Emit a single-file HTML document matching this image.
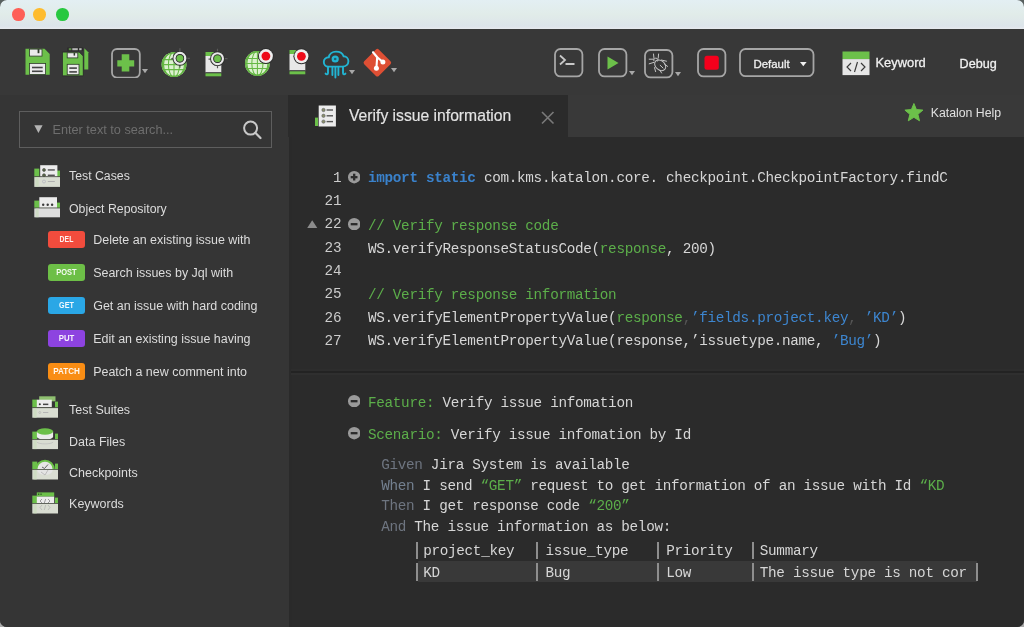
<!DOCTYPE html><html><head><meta charset="utf-8"><style>html,body{margin:0;padding:0;width:1024px;height:627px;overflow:hidden;background:#2b2b2b}</style></head><body><div style="position:relative;width:1024px;height:627px;overflow:hidden;will-change:transform"><div style="position:absolute;left:0px;top:0px;width:1024px;height:313px;background:#58605f"></div>
<div style="position:absolute;left:0px;top:313px;width:1024px;height:314px;background:#a9a9a9"></div>
<div style="position:absolute;left:0;top:0;width:1024px;height:627px;border-radius:7px;overflow:hidden;background:#353535">
<div style="position:absolute;left:0px;top:0px;width:1024px;height:29px;background:linear-gradient(#e3eff3,#e1ece9 50%,#dce4ea 90%,#e6e9ee)"></div>
<div style="position:absolute;left:12.45px;top:8.2px;width:12.6px;height:12.6px;border-radius:50%;background:#fe5f57"></div>
<div style="position:absolute;left:33.45px;top:8.2px;width:12.6px;height:12.6px;border-radius:50%;background:#febc2e"></div>
<div style="position:absolute;left:56.45px;top:8.2px;width:12.6px;height:12.6px;border-radius:50%;background:#28c840"></div>
<div style="position:absolute;left:0px;top:29px;width:1024px;height:66px;background:#383838"></div>
<div style="position:absolute;left:0px;top:95px;width:288.8px;height:532px;background:#353535"></div>
<div style="position:absolute;left:288.8px;top:95px;width:3.4px;height:532px;background:#2a2a2a"></div>
<div style="position:absolute;left:292px;top:95px;width:732px;height:42px;background:#393939"></div>
<div style="position:absolute;left:288px;top:95px;width:280px;height:42px;background:#2b2b2b"></div>
<div style="position:absolute;left:292.2px;top:137px;width:732px;height:490px;background:#2b2b2b"></div>
<div style="position:absolute;left:291px;top:369px;width:733px;height:2px;background:#2d2d2d"></div>
<div style="position:absolute;left:291px;top:371px;width:733px;height:1.5px;background:#232323"></div>
<div style="position:absolute;left:291px;top:372.5px;width:733px;height:2.5px;background:#2f2f2f"></div>
<svg style="position:absolute;left:25px;top:48px;" width="26" height="28" viewBox="0 0 26 28">
<path d="M0.5 0.8 H19.5 L24.7 6 V26.8 H0.5 Z" fill="#6cc04a"/>
<rect x="4.5" y="1.1" width="12.5" height="7" fill="#eaeaea" stroke="#2e3a2a" stroke-width="0.8"/>
<rect x="12.6" y="1.1" width="1.8" height="4.1" fill="#2e3a2a"/>
<rect x="4.5" y="15.4" width="16.1" height="11" fill="#eaeaea" stroke="#2e3a2a" stroke-width="0.8"/>
<rect x="7" y="18.7" width="10.7" height="1.6" fill="#444"/>
<rect x="7" y="22.5" width="10.7" height="1.6" fill="#444"/>
</svg>
<svg style="position:absolute;left:62px;top:47px;" width="28" height="30" viewBox="0 0 28 30">
<path d="M22.3 1.3 L26.3 5.3 V22.6 H22.3 Z" fill="#6cc04a"/>
<rect x="5.3" y="0.6" width="15.8" height="3.2" fill="#2a2a2a"/>
<rect x="6.8" y="1.2" width="2.6" height="2" fill="#5e8f48"/><rect x="10.3" y="1.2" width="5.5" height="2" fill="#b8b8b8"/><rect x="17.2" y="1.2" width="2.4" height="2" fill="#b8b8b8"/>
<path d="M0.3 5 H17.3 L21.3 9 V28.9 H0.3 Z" fill="#6cc04a" stroke="#2b2b2b" stroke-width="1"/>
<rect x="5.2" y="5.8" width="10.6" height="5.1" fill="#eaeaea" stroke="#2e3a2a" stroke-width="0.8"/>
<rect x="11.6" y="5.8" width="1.5" height="2.8" fill="#2e3a2a"/>
<rect x="5.2" y="17.3" width="11.8" height="10.4" fill="#eaeaea" stroke="#2e3a2a" stroke-width="0.8"/>
<rect x="7.3" y="20.3" width="7.6" height="1.6" fill="#444"/>
<rect x="7.3" y="24.1" width="7.6" height="1.6" fill="#444"/>
</svg>
<svg style="position:absolute;left:111px;top:48px;" width="30" height="30" viewBox="0 0 30 30">
<rect x="1" y="1" width="27.8" height="28.6" rx="5" fill="none" stroke="#a6a6a6" stroke-width="1.8"/>
<path d="M10.7 6.3 H18.3 V12.2 H23.2 V18.6 H18.3 V23.6 H10.7 V18.6 H6.3 V12.2 H10.7 Z" fill="#6cc04a"/>
</svg>
<svg style="position:absolute;left:142.4px;top:69.3px;" width="6" height="5.2" viewBox="0 0 6 5.2"><path d="M0 0 H6 L3.0 4.2 Z" fill="#a8a8a8"/></svg>
<svg style="position:absolute;left:158px;top:44px;" width="36" height="36" viewBox="0 0 36 36">
<defs><clipPath id="gc160206"><circle cx="16" cy="20.6" r="12.4"/></clipPath></defs>
<circle cx="16" cy="20.6" r="12.4" fill="#dcf1cf"/>
<g clip-path="url(#gc160206)" fill="none" stroke="#66b845" stroke-width="1.05">
<path d="M3.5999999999999996 15.600000000000001 H28.4 M3.5999999999999996 20.6 H28.4 M3.5999999999999996 25.6 H28.4 M16 8.200000000000001 V33.0"/>
<ellipse cx="16" cy="20.6" rx="5.58" ry="12.4"/>
<ellipse cx="16" cy="20.6" rx="10.54" ry="12.4"/>
</g>
<circle cx="16" cy="20.6" r="11.700000000000001" fill="none" stroke="#62b441" stroke-width="1.4"/>

<path d="M21.9 4.300000000000001 V7.800000000000001 M28.4 14.3 H31.9 M21.9 20.8 V23.8 M15.399999999999999 14.8 H12.899999999999999" stroke="#5a5a5a" stroke-width="1.2"/>
<circle cx="21.9" cy="14.3" r="7.4" fill="#2e2e2e"/>
<circle cx="21.9" cy="14.3" r="5.35" fill="none" stroke="#e8e8e8" stroke-width="2.3"/>
<circle cx="21.9" cy="14.3" r="4.1" fill="#333"/>
<circle cx="21.9" cy="14.3" r="3.4" fill="#6cc04a"/>
</svg>
<svg style="position:absolute;left:205px;top:48px;" width="30" height="30" viewBox="0 0 30 30">
<rect x="0.5" y="8" width="15.8" height="16.5" fill="#e8e8e8"/>
<rect x="0.5" y="4" width="15.8" height="4" fill="#6cc04a"/>
<rect x="0.5" y="24.3" width="15.8" height="1" fill="#3a3a3a"/>
<rect x="0.5" y="25.3" width="15.8" height="3" fill="#6cc04a"/>

<path d="M12.5 0.6999999999999993 V4.199999999999999 M19.0 10.7 H22.5 M12.5 17.2 V20.2 M6.0 11.2 H3.5" stroke="#5a5a5a" stroke-width="1.2"/>
<circle cx="12.5" cy="10.7" r="7.4" fill="#2e2e2e"/>
<circle cx="12.5" cy="10.7" r="5.35" fill="none" stroke="#e8e8e8" stroke-width="2.3"/>
<circle cx="12.5" cy="10.7" r="4.1" fill="#333"/>
<circle cx="12.5" cy="10.7" r="3.4" fill="#6cc04a"/>
</svg>
<svg style="position:absolute;left:242px;top:44px;" width="36" height="36" viewBox="0 0 36 36">
<defs><clipPath id="gc154194"><circle cx="15.4" cy="19.4" r="12.4"/></clipPath></defs>
<circle cx="15.4" cy="19.4" r="12.4" fill="#dcf1cf"/>
<g clip-path="url(#gc154194)" fill="none" stroke="#66b845" stroke-width="1.05">
<path d="M3.0 14.399999999999999 H27.8 M3.0 19.4 H27.8 M3.0 24.4 H27.8 M15.4 6.999999999999998 V31.799999999999997"/>
<ellipse cx="15.4" cy="19.4" rx="5.58" ry="12.4"/>
<ellipse cx="15.4" cy="19.4" rx="10.54" ry="12.4"/>
</g>
<circle cx="15.4" cy="19.4" r="11.700000000000001" fill="none" stroke="#62b441" stroke-width="1.4"/>

<circle cx="23.9" cy="12.1" r="8" fill="#2e2e2e"/>
<circle cx="23.9" cy="12.1" r="7.0" fill="#eeeeee"/>
<circle cx="23.9" cy="12.1" r="4.4" fill="#ee0b1a"/>
</svg>
<svg style="position:absolute;left:289px;top:46px;" width="30" height="30" viewBox="0 0 30 30">
<rect x="0.5" y="8" width="15.8" height="16.5" fill="#e8e8e8"/>
<rect x="0.5" y="4" width="15.8" height="4" fill="#6cc04a"/>
<rect x="0.5" y="24.3" width="15.8" height="1" fill="#3a3a3a"/>
<rect x="0.5" y="25.3" width="15.8" height="3" fill="#6cc04a"/>

<circle cx="12.4" cy="10.3" r="8" fill="#2e2e2e"/>
<circle cx="12.4" cy="10.3" r="7.0" fill="#eeeeee"/>
<circle cx="12.4" cy="10.3" r="4.4" fill="#ee0b1a"/>
</svg>
<svg style="position:absolute;left:320px;top:48px;" width="34" height="32" viewBox="0 0 34 32">
<g fill="none" stroke="#22b5d3" stroke-width="1.9" stroke-linecap="round">
<path d="M8.2 18.6 H22.2 C26 18.6 28.4 16.2 28.4 13.2 C28.4 10.3 26.2 8.3 23.6 8.3 C22.6 5.2 19.5 3.6 16 3.6 C12.2 3.6 9.3 6 8.8 9.3 C5.8 9.4 3.8 11.5 3.8 14 C3.8 16.6 5.8 18.6 8.2 18.6 Z"/>
<path d="M8 19 V25 C8 26.5 6.5 26.8 5.6 25.6 M12.4 19.5 V27 M15.4 19.5 V29.5 M18.4 19.5 V27 M23 19 V25 C23 26.5 24.5 26.8 25.4 25.6"/>
</g><circle cx="15.2" cy="11" r="3.6" fill="#22b5d3"/><circle cx="15.2" cy="11" r="1.3" fill="#1d5f70"/>
</svg>
<svg style="position:absolute;left:349.3px;top:69.7px;" width="6" height="5.2" viewBox="0 0 6 5.2"><path d="M0 0 H6 L3.0 4.2 Z" fill="#a8a8a8"/></svg>
<svg style="position:absolute;left:362px;top:47px;" width="32" height="32" viewBox="0 0 32 32">
<rect x="5.4" y="5.4" width="20.6" height="20.6" rx="2" transform="rotate(45 15.5 15.3)" fill="#de4f34"/>
<g stroke="#fff" stroke-width="2.1" fill="none" stroke-linecap="round"><path d="M11 5.2 L15.2 10.2 L14.4 21 M15.2 10.2 L20.8 15"/></g>
<circle cx="14.4" cy="21.3" r="2.5" fill="#fff"/><circle cx="20.9" cy="15" r="2.5" fill="#fff"/>
</svg>
<svg style="position:absolute;left:390.5px;top:67.7px;" width="6" height="5.2" viewBox="0 0 6 5.2"><path d="M0 0 H6 L3.0 4.2 Z" fill="#a8a8a8"/></svg>
<svg style="position:absolute;left:554px;top:48px;" width="30" height="30" viewBox="0 0 30 30"><rect x="1" y="1" width="27.4" height="27.4" rx="5.5" fill="none" stroke="#a6a6a6" stroke-width="1.8"/><path d="M6 7.5 L11 12 L6 16.5 M11.5 16 H20.5" fill="none" stroke="#c8c8c8" stroke-width="1.8"/></svg>
<svg style="position:absolute;left:598px;top:48px;" width="30" height="30" viewBox="0 0 30 30"><rect x="1" y="1" width="27.4" height="27.4" rx="5.5" fill="none" stroke="#a6a6a6" stroke-width="1.8"/><path d="M9.5 8.5 L20.5 15 L9.5 21.5 Z" fill="#6cc04a"/></svg>
<svg style="position:absolute;left:629.2px;top:71px;" width="6" height="5.2" viewBox="0 0 6 5.2"><path d="M0 0 H6 L3.0 4.2 Z" fill="#a8a8a8"/></svg>
<svg style="position:absolute;left:644px;top:48.5px;" width="30" height="30" viewBox="0 0 30 30"><rect x="1" y="1" width="27.4" height="27.4" rx="5.5" fill="none" stroke="#a6a6a6" stroke-width="1.8"/><g fill="none" stroke="#c4c4c4" stroke-width="1" stroke-linecap="round">
<ellipse cx="16.2" cy="16.3" rx="6.2" ry="4.6" transform="rotate(42 16.2 16.3)"/>
<path d="M9.8 11.8 C9.5 9.8 11.2 8.6 13 9.4 C14.4 10 14.2 11.5 13.6 12.2"/>
<path d="M9.5 5 L10 9.3 M14.6 5 L14.2 9.2 M5.2 10.2 H9.6 M5.2 14.8 L9.8 13.4 M10.5 18.6 L11.6 22.6 M17.2 11 L22.5 12.2 M20.6 15.2 L23.6 17.4 M15.8 21.2 L17.6 24 M16.2 16.3 L19 19"/>
</g></svg>
<svg style="position:absolute;left:674.8px;top:71.7px;" width="6" height="5.2" viewBox="0 0 6 5.2"><path d="M0 0 H6 L3.0 4.2 Z" fill="#a8a8a8"/></svg>
<svg style="position:absolute;left:697px;top:48px;" width="30" height="30" viewBox="0 0 30 30"><rect x="1" y="1" width="27.4" height="27.4" rx="5.5" fill="none" stroke="#a6a6a6" stroke-width="1.8"/><rect x="7.5" y="7.8" width="14.3" height="14" rx="2.5" fill="#f5001c"/></svg>
<svg style="position:absolute;left:739px;top:48px;" width="76" height="30" viewBox="0 0 76 30"><rect x="1" y="1" width="73.5" height="27.2" rx="5.5" fill="none" stroke="#a6a6a6" stroke-width="1.8"/><path d="M61 14 H67.6 L64.3 18.3 Z" fill="#f0f0f0"/></svg>
<div style="position:absolute;left:753.40px;top:58.51px;font:400 11.45px/11.45px 'Liberation Sans', sans-serif;color:#f0f0f0;white-space:pre;-webkit-text-stroke:0.3px #f0f0f0">Default</div>
<svg style="position:absolute;left:842px;top:51px;" width="28" height="25" viewBox="0 0 28 25"><rect x="0.5" y="0.5" width="27" height="7.6" fill="#6cc04a"/><rect x="0.5" y="8.1" width="27" height="16" fill="#e6e6e6"/><path d="M9 12 L5 16 L9 20 M19 12 L23 16 L19 20 M15.5 11 L12.5 21" fill="none" stroke="#3a3a3a" stroke-width="1.15"/></svg>
<div style="position:absolute;left:875.50px;top:57.39px;font:400 12.9px/12.9px 'Liberation Sans', sans-serif;color:#f0f0f0;white-space:pre;-webkit-text-stroke:0.3px #f0f0f0">Keyword</div>
<div style="position:absolute;left:959.60px;top:57.64px;font:400 12.6px/12.6px 'Liberation Sans', sans-serif;color:#f0f0f0;white-space:pre;-webkit-text-stroke:0.3px #f0f0f0">Debug</div>
<div style="position:absolute;left:19.3px;top:111.4px;width:252.7px;height:37.1px;box-sizing:border-box;border:1.8px solid #5e5e5e"></div>
<svg style="position:absolute;left:34px;top:124.5px;" width="9" height="8.5" viewBox="0 0 9 8.5"><path d="M0.3 0.3 H8.6 L4.45 8 Z" fill="#b4b4b4"/></svg>
<div style="position:absolute;left:52.50px;top:123.66px;font:400 12.7px/12.7px 'Liberation Sans', sans-serif;color:#6e6e6e;white-space:pre;">Enter text to search...</div>
<svg style="position:absolute;left:240px;top:118px;" width="24" height="24" viewBox="0 0 24 24"><circle cx="10.6" cy="10.1" r="6.5" fill="none" stroke="#c8c8c8" stroke-width="2"/><path d="M15.3 14.8 L20.5 20" stroke="#c8c8c8" stroke-width="2.2" stroke-linecap="round"/></svg>
<svg style="position:absolute;left:33.6px;top:164.7px;" width="27" height="23" viewBox="0 0 27 23">
<rect x="0.3" y="3.6" width="5" height="8.200000000000001" fill="#6cc04a"/>
<rect x="23" y="5.6" width="3" height="6.200000000000001" fill="#6cc04a"/>
<rect x="6.2" y="0.2" width="17.2" height="11.8" fill="#ececec"/>
<circle cx="10" cy="4.9" r="1.5" fill="#5b6b48" stroke="#333" stroke-width="0.5"/><rect x="13.8" y="4.3" width="7" height="1.3" fill="#444"/>
<circle cx="10" cy="10.2" r="1.5" fill="#5b6b48" stroke="#333" stroke-width="0.5"/><rect x="13.8" y="9.6" width="7" height="1.3" fill="#444"/>
<rect x="0.3" y="11.200000000000001" width="25.7" height="0.9" fill="#4f5349"/>
<rect x="0.3" y="12.100000000000001" width="25.7" height="9.8" fill="#d9ddd2"/>
<rect x="1.5" y="12.100000000000001" width="3.2" height="9.8" fill="#c9dcbc" opacity="0.7"/>
<circle cx="10" cy="16.5" r="1.5" fill="none" stroke="#aab" stroke-width="0.6"/><rect x="13.8" y="16" width="7" height="1" fill="#b0b0b0"/>
</svg>
<div style="position:absolute;left:69.00px;top:169.89px;font:400 12.3px/12.3px 'Liberation Sans', sans-serif;color:#dcdcdc;white-space:pre;">Test Cases</div>
<svg style="position:absolute;left:33.6px;top:197.3px;" width="27" height="23" viewBox="0 0 27 23">
<rect x="0.3" y="3.6" width="5" height="7.5" fill="#6cc04a"/>
<rect x="23" y="5.6" width="3" height="5.5" fill="#6cc04a"/>
<rect x="5.3" y="0.2" width="17.7" height="11" fill="#ececec"/><circle cx="9.2" cy="7.7" r="1.2" fill="#3a3a3a"/><circle cx="13.7" cy="7.7" r="1.2" fill="#3a3a3a"/><circle cx="18.1" cy="7.7" r="1.2" fill="#3a3a3a"/>
<rect x="0.3" y="10.5" width="25.7" height="0.9" fill="#4f5349"/>
<rect x="0.3" y="11.4" width="25.7" height="8.9" fill="#dedede"/>
<rect x="1.5" y="11.4" width="3.2" height="8.9" fill="#c9dcbc" opacity="0.7"/>

</svg>
<div style="position:absolute;left:69.00px;top:202.99px;font:400 12.3px/12.3px 'Liberation Sans', sans-serif;color:#dcdcdc;white-space:pre;">Object Repository</div>
<div style="position:absolute;left:48px;top:231px;width:37px;height:16.6px;border-radius:3px;background:#f24c3d"></div>
<div style="position:absolute;left:48px;top:231.9px;width:37px;height:16.6px;font:700 8.2px/16.6px 'Liberation Sans', sans-serif;color:rgba(255,255,255,0.92);text-align:center;transform:scaleX(0.84)">DEL</div>
<div style="position:absolute;left:93.20px;top:233.94px;font:400 12.48px/12.48px 'Liberation Sans', sans-serif;color:#dcdcdc;white-space:pre;">Delete an existing issue with</div>
<div style="position:absolute;left:48px;top:264px;width:37px;height:16.6px;border-radius:3px;background:#6dbf47"></div>
<div style="position:absolute;left:48px;top:264.9px;width:37px;height:16.6px;font:700 8.2px/16.6px 'Liberation Sans', sans-serif;color:rgba(255,255,255,0.92);text-align:center;transform:scaleX(0.915)">POST</div>
<div style="position:absolute;left:93.20px;top:266.94px;font:400 12.48px/12.48px 'Liberation Sans', sans-serif;color:#dcdcdc;white-space:pre;">Search issues by Jql with</div>
<div style="position:absolute;left:48px;top:297px;width:37px;height:16.6px;border-radius:3px;background:#2aa7e6"></div>
<div style="position:absolute;left:48px;top:297.9px;width:37px;height:16.6px;font:700 8.2px/16.6px 'Liberation Sans', sans-serif;color:rgba(255,255,255,0.92);text-align:center;transform:scaleX(0.88)">GET</div>
<div style="position:absolute;left:93.20px;top:299.94px;font:400 12.48px/12.48px 'Liberation Sans', sans-serif;color:#dcdcdc;white-space:pre;">Get an issue with hard coding</div>
<div style="position:absolute;left:48px;top:330px;width:37px;height:16.6px;border-radius:3px;background:#8d43e0"></div>
<div style="position:absolute;left:48px;top:330.9px;width:37px;height:16.6px;font:700 8.2px/16.6px 'Liberation Sans', sans-serif;color:rgba(255,255,255,0.92);text-align:center;transform:scaleX(0.95)">PUT</div>
<div style="position:absolute;left:93.20px;top:332.94px;font:400 12.48px/12.48px 'Liberation Sans', sans-serif;color:#dcdcdc;white-space:pre;">Edit an existing issue having</div>
<div style="position:absolute;left:48px;top:363px;width:37px;height:16.6px;border-radius:3px;background:#f98d14"></div>
<div style="position:absolute;left:48px;top:363.9px;width:37px;height:16.6px;font:700 8.2px/16.6px 'Liberation Sans', sans-serif;color:rgba(255,255,255,0.92);text-align:center;transform:scaleX(0.99)">PATCH</div>
<div style="position:absolute;left:93.20px;top:365.94px;font:400 12.48px/12.48px 'Liberation Sans', sans-serif;color:#dcdcdc;white-space:pre;">Peatch a new comment into</div>
<div style="position:absolute;left:69.10px;top:403.84px;font:400 12.48px/12.48px 'Liberation Sans', sans-serif;color:#dcdcdc;white-space:pre;">Test Suites</div>
<div style="position:absolute;left:69.10px;top:435.54px;font:400 12.48px/12.48px 'Liberation Sans', sans-serif;color:#dcdcdc;white-space:pre;">Data Files</div>
<div style="position:absolute;left:69.10px;top:466.64px;font:400 12.48px/12.48px 'Liberation Sans', sans-serif;color:#dcdcdc;white-space:pre;">Checkpoints</div>
<div style="position:absolute;left:69.10px;top:498.14px;font:400 12.48px/12.48px 'Liberation Sans', sans-serif;color:#dcdcdc;white-space:pre;">Keywords</div>
<svg style="position:absolute;left:32.3px;top:396px;" width="27" height="23" viewBox="0 0 27 23">
<rect x="0.3" y="3.6" width="5" height="8.200000000000001" fill="#6cc04a"/>
<rect x="23" y="5.6" width="3" height="6.200000000000001" fill="#6cc04a"/>
<rect x="7.2" y="0.3" width="16.3" height="5" fill="#8fc070"/><rect x="4.8" y="3.7" width="15" height="7.6" fill="#ececec"/><circle cx="7.8" cy="8.3" r="1" fill="#333"/><rect x="11" y="7.6" width="5.3" height="1.5" fill="#444"/>
<rect x="0.3" y="11.200000000000001" width="25.7" height="0.9" fill="#4f5349"/>
<rect x="0.3" y="12.100000000000001" width="25.7" height="9.6" fill="#d9ddd2"/>
<rect x="1.5" y="12.100000000000001" width="3.2" height="9.6" fill="#c9dcbc" opacity="0.7"/>
<circle cx="7.8" cy="16.5" r="1" fill="none" stroke="#aaa" stroke-width="0.5"/><rect x="11" y="16" width="5.3" height="1" fill="#b5b5b5"/>
</svg>
<svg style="position:absolute;left:32.3px;top:427.8px;" width="27" height="23" viewBox="0 0 27 23">
<rect x="0.3" y="3.6" width="5" height="8.0" fill="#6cc04a"/>
<rect x="23" y="5.6" width="3" height="6.0" fill="#6cc04a"/>
<path d="M4.9 3.5 V8.5 C4.9 10.5 8.5 11.6 13 11.6 C17.5 11.6 21.1 10.5 21.1 8.5 V3.5 Z" fill="#ececec"/><ellipse cx="13" cy="3.5" rx="8.1" ry="3.3" fill="#6cc04a"/>
<rect x="0.3" y="11.0" width="25.7" height="0.9" fill="#4f5349"/>
<rect x="0.3" y="11.9" width="25.7" height="9.2" fill="#d9ddd2"/>
<rect x="1.5" y="11.9" width="3.2" height="9.2" fill="#c9dcbc" opacity="0.7"/>
<path d="M4.9 14 C6 16.5 20 16.5 21.1 14" stroke="#bbb" stroke-width="0.7" fill="none"/>
</svg>
<svg style="position:absolute;left:32.3px;top:458.2px;" width="27" height="23" viewBox="0 0 27 23">
<rect x="0.3" y="3.6" width="5" height="8.0" fill="#6cc04a"/>
<rect x="23" y="5.6" width="3" height="6.0" fill="#6cc04a"/>
<path d="M3.2 11.5 A9.8 9.8 0 0 1 22.8 11.5 Z" fill="#6cc04a"/><path d="M5.3 11.5 A7.7 7.7 0 0 1 20.7 11.5 Z" fill="#e6e6e6"/><path d="M10 9 L12.5 10.5 L16 6.5" stroke="#555" stroke-width="0.9" fill="none"/>
<rect x="0.3" y="11.0" width="25.7" height="0.9" fill="#4f5349"/>
<rect x="0.3" y="11.9" width="25.7" height="9.6" fill="#d9ddd2"/>
<rect x="1.5" y="11.9" width="3.2" height="9.6" fill="#c9dcbc" opacity="0.7"/>
<path d="M5.3 11.9 C6 18.5 20 18.5 20.7 11.9" fill="#e4e4e4"/><path d="M9 14 L13 17 L16 12" stroke="#aaa" stroke-width="0.7" fill="none"/>
</svg>
<svg style="position:absolute;left:32.3px;top:491.8px;" width="27" height="23" viewBox="0 0 27 23">
<rect x="0.3" y="3.6" width="5" height="8.0" fill="#6cc04a"/>
<rect x="23" y="5.6" width="3" height="6.0" fill="#6cc04a"/>
<rect x="4.8" y="0.4" width="17.4" height="4.2" fill="#6cc04a"/><rect x="6" y="1.6" width="1.3" height="1.2" fill="#2a4a20"/><rect x="8.4" y="1.6" width="1.3" height="1.2" fill="#2a4a20"/><rect x="4.8" y="4.6" width="17.4" height="6.8" fill="#ececec"/><path d="M10 7 L8 9 L10 11 M16 7 L18 9 L16 11 M12.3 11 L13.7 7" stroke="#777" stroke-width="0.7" fill="none"/>
<rect x="0.3" y="11.0" width="25.7" height="0.9" fill="#4f5349"/>
<rect x="0.3" y="11.9" width="25.7" height="9.6" fill="#d9ddd2"/>
<rect x="1.5" y="11.9" width="3.2" height="9.6" fill="#c9dcbc" opacity="0.7"/>
<path d="M10 13 L8 15.5 L10 18 M16 13 L18 15.5 L16 18 M12.3 18 L13.7 13" stroke="#aaa" stroke-width="0.6" fill="none"/>
</svg>
<svg style="position:absolute;left:314px;top:105px;" width="23" height="23" viewBox="0 0 23 23"><rect x="4.7" y="0.5" width="17.2" height="21" fill="#ececec"/>
<rect x="1" y="12.6" width="3" height="8.4" fill="#6cc04a"/>
<g fill="#8a8f6a" stroke="#556" stroke-width="0.5"><circle cx="9.5" cy="5" r="1.7"/><circle cx="9.5" cy="10.8" r="1.7"/><circle cx="9.5" cy="16.6" r="1.7"/></g>
<g fill="#555"><rect x="12.6" y="4.3" width="6.4" height="1.4"/><rect x="12.6" y="10.1" width="6.4" height="1.4"/><rect x="12.6" y="15.9" width="6.4" height="1.4"/></g></svg>
<div style="position:absolute;left:349.00px;top:108.22px;font:400 15.7px/15.7px 'Liberation Sans', sans-serif;color:#e4e4e4;white-space:pre;-webkit-text-stroke:0.15px #e4e4e4">Verify issue information</div>
<svg style="position:absolute;left:540px;top:110px;" width="16" height="16" viewBox="0 0 16 16"><path d="M2 2 L13.5 13.5 M13.5 2 L2 13.5" stroke="#7a7a7a" stroke-width="1.6"/></svg>
<svg style="position:absolute;left:903px;top:102px;" width="22" height="20" viewBox="0 0 22 20"><path d="M10.9 1.5 L13.4 7.6 L19.9 8.1 L14.9 12.3 L16.5 18.8 L10.9 15.3 L5.3 18.8 L6.9 12.3 L1.9 8.1 L8.4 7.6 Z" fill="#6cc04a" stroke="#6cc04a" stroke-width="1" stroke-linejoin="round"/></svg>
<div style="position:absolute;left:930.70px;top:106.59px;font:400 12.3px/12.3px 'Liberation Sans', sans-serif;color:#e0e0e0;white-space:pre;">Katalon Help</div>
<div style="position:absolute;left:300px;width:41.6px;text-align:right;top:170.95px;font:400 14.3px/14.3px 'Liberation Mono', monospace;color:#cccccc">1</div>
<div style="position:absolute;left:368.00px;top:171.05px;font:400 14.3px/14.3px 'Liberation Mono', monospace;letter-spacing:-0.300px;white-space:pre;color:#d8d8d8"><span style="color:#3a82cc;font-weight:700">import static</span><span style="color:#d6d6d6;font-weight:400"> com.kms.katalon.core. checkpoint.CheckpointFactory.findC</span></div>
<div style="position:absolute;left:300px;width:41.6px;text-align:right;top:194.15px;font:400 14.3px/14.3px 'Liberation Mono', monospace;color:#cccccc">21</div>
<div style="position:absolute;left:300px;width:41.6px;text-align:right;top:217.43px;font:400 14.3px/14.3px 'Liberation Mono', monospace;color:#cccccc">22</div>
<div style="position:absolute;left:368.00px;top:219.02px;font:400 14.3px/14.3px 'Liberation Mono', monospace;letter-spacing:-0.300px;white-space:pre;color:#d8d8d8"><span style="color:#5cae4a;font-weight:400">// Verify response code</span></div>
<div style="position:absolute;left:300px;width:41.6px;text-align:right;top:240.71px;font:400 14.3px/14.3px 'Liberation Mono', monospace;color:#cccccc">23</div>
<div style="position:absolute;left:368.00px;top:242.09px;font:400 14.3px/14.3px 'Liberation Mono', monospace;letter-spacing:-0.300px;white-space:pre;color:#d8d8d8"><span style="color:#d6d6d6;font-weight:400">WS.verifyResponseStatusCode(</span><span style="color:#5cae4a;font-weight:400">response</span><span style="color:#d6d6d6;font-weight:400">, 200)</span></div>
<div style="position:absolute;left:300px;width:41.6px;text-align:right;top:263.99px;font:400 14.3px/14.3px 'Liberation Mono', monospace;color:#cccccc">24</div>
<div style="position:absolute;left:300px;width:41.6px;text-align:right;top:287.27px;font:400 14.3px/14.3px 'Liberation Mono', monospace;color:#cccccc">25</div>
<div style="position:absolute;left:368.00px;top:288.23px;font:400 14.3px/14.3px 'Liberation Mono', monospace;letter-spacing:-0.300px;white-space:pre;color:#d8d8d8"><span style="color:#5cae4a;font-weight:400">// Verify response information</span></div>
<div style="position:absolute;left:300px;width:41.6px;text-align:right;top:310.55px;font:400 14.3px/14.3px 'Liberation Mono', monospace;color:#cccccc">26</div>
<div style="position:absolute;left:368.00px;top:311.30px;font:400 14.3px/14.3px 'Liberation Mono', monospace;letter-spacing:-0.300px;white-space:pre;color:#d8d8d8"><span style="color:#d6d6d6;font-weight:400">WS.verifyElementPropertyValue(</span><span style="color:#5cae4a;font-weight:400">response</span><span style="color:#555555;font-weight:400">,</span><span style="color:#3d86d0;font-weight:400">’fields.project.key</span><span style="color:#555555;font-weight:400">,</span><span style="color:#3d86d0;font-weight:400"> ’KD’</span><span style="color:#d6d6d6;font-weight:400">)</span></div>
<div style="position:absolute;left:300px;width:41.6px;text-align:right;top:333.83px;font:400 14.3px/14.3px 'Liberation Mono', monospace;color:#cccccc">27</div>
<div style="position:absolute;left:368.00px;top:334.37px;font:400 14.3px/14.3px 'Liberation Mono', monospace;letter-spacing:-0.300px;white-space:pre;color:#d8d8d8"><span style="color:#d6d6d6;font-weight:400">WS.verifyElementPropertyValue(response,’issuetype.name, </span><span style="color:#3d86d0;font-weight:400">’Bug’</span><span style="color:#d6d6d6;font-weight:400">)</span></div>
<svg style="position:absolute;left:347.6px;top:171.3px;" width="12.4" height="12.4" viewBox="0 0 12.4 12.4"><circle cx="6.2" cy="6.2" r="6.2" fill="#9a9a9a"/><path d="M2.7 6.2 H9.5" stroke="#2b2b2b" stroke-width="2.3"/><path d="M6.2 2.7 V9.5" stroke="#2b2b2b" stroke-width="2.3"/></svg>
<svg style="position:absolute;left:347.6px;top:218.0px;" width="12.4" height="12.4" viewBox="0 0 12.4 12.4"><circle cx="6.2" cy="6.2" r="6.2" fill="#9a9a9a"/><path d="M2.7 6.2 H9.5" stroke="#2b2b2b" stroke-width="2.3"/></svg>
<svg style="position:absolute;left:306.5px;top:220px;" width="11" height="9" viewBox="0 0 11 9"><path d="M5.2 0.3 L10.3 8 H0.2 Z" fill="#8c8c8c"/></svg>
<svg style="position:absolute;left:347.6px;top:394.7px;" width="12.4" height="12.4" viewBox="0 0 12.4 12.4"><circle cx="6.2" cy="6.2" r="6.2" fill="#9a9a9a"/><path d="M2.7 6.2 H9.5" stroke="#2b2b2b" stroke-width="2.3"/></svg>
<svg style="position:absolute;left:347.6px;top:427.40000000000003px;" width="12.4" height="12.4" viewBox="0 0 12.4 12.4"><circle cx="6.2" cy="6.2" r="6.2" fill="#9a9a9a"/><path d="M2.7 6.2 H9.5" stroke="#2b2b2b" stroke-width="2.3"/></svg>
<div style="position:absolute;left:368.00px;top:395.95px;font:400 14.3px/14.3px 'Liberation Mono', monospace;letter-spacing:-0.300px;white-space:pre;color:#d8d8d8"><span style="color:#5cae4a;font-weight:400">Feature:</span><span style="color:#d6d6d6;font-weight:400"> Verify issue infomation</span></div>
<div style="position:absolute;left:368.00px;top:427.75px;font:400 14.3px/14.3px 'Liberation Mono', monospace;letter-spacing:-0.300px;white-space:pre;color:#d8d8d8"><span style="color:#5cae4a;font-weight:400">Scenario:</span><span style="color:#d6d6d6;font-weight:400"> Verify issue infomation by Id</span></div>
<div style="position:absolute;left:381.20px;top:458.45px;font:400 14.3px/14.3px 'Liberation Mono', monospace;letter-spacing:-0.300px;white-space:pre;color:#d8d8d8"><span style="color:#6e7580;font-weight:400">Given</span><span style="color:#d6d6d6;font-weight:400"> Jira System is available</span></div>
<div style="position:absolute;left:381.20px;top:479.25px;font:400 14.3px/14.3px 'Liberation Mono', monospace;letter-spacing:-0.300px;white-space:pre;color:#d8d8d8"><span style="color:#738090;font-weight:400">When</span><span style="color:#d6d6d6;font-weight:400"> I send </span><span style="color:#5cae4a;font-weight:400">“GET”</span><span style="color:#d6d6d6;font-weight:400"> request to get information of an issue with Id </span><span style="color:#5cae4a;font-weight:400">“KD</span></div>
<div style="position:absolute;left:381.20px;top:499.35px;font:400 14.3px/14.3px 'Liberation Mono', monospace;letter-spacing:-0.300px;white-space:pre;color:#d8d8d8"><span style="color:#6e7580;font-weight:400">Then</span><span style="color:#d6d6d6;font-weight:400"> I get response code </span><span style="color:#5cae4a;font-weight:400">“200”</span></div>
<div style="position:absolute;left:381.20px;top:520.15px;font:400 14.3px/14.3px 'Liberation Mono', monospace;letter-spacing:-0.300px;white-space:pre;color:#d8d8d8"><span style="color:#6e7580;font-weight:400">And</span><span style="color:#d6d6d6;font-weight:400"> The issue information as below:</span></div>
<div style="position:absolute;left:418px;top:561.3px;width:559px;height:20.8px;background:#393939"></div>
<div style="position:absolute;left:416.4px;top:541.8px;width:1.8px;height:17.5px;background:#8e8e8e"></div>
<div style="position:absolute;left:416.4px;top:563px;width:1.8px;height:18px;background:#8e8e8e"></div>
<div style="position:absolute;left:536.3px;top:541.8px;width:1.8px;height:17.5px;background:#8e8e8e"></div>
<div style="position:absolute;left:536.3px;top:563px;width:1.8px;height:18px;background:#8e8e8e"></div>
<div style="position:absolute;left:657px;top:541.8px;width:1.8px;height:17.5px;background:#8e8e8e"></div>
<div style="position:absolute;left:657px;top:563px;width:1.8px;height:18px;background:#8e8e8e"></div>
<div style="position:absolute;left:751.8px;top:541.8px;width:1.8px;height:17.5px;background:#8e8e8e"></div>
<div style="position:absolute;left:751.8px;top:563px;width:1.8px;height:18px;background:#8e8e8e"></div>
<div style="position:absolute;left:975.8px;top:563px;width:1.8px;height:18px;background:#8e8e8e"></div>
<div style="position:absolute;left:423.20px;top:544.25px;font:400 14.3px/14.3px 'Liberation Mono', monospace;letter-spacing:-0.300px;white-space:pre;color:#d8d8d8"><span style="color:#d6d6d6;font-weight:400">project_key</span></div>
<div style="position:absolute;left:545.50px;top:544.25px;font:400 14.3px/14.3px 'Liberation Mono', monospace;letter-spacing:-0.300px;white-space:pre;color:#d8d8d8"><span style="color:#d6d6d6;font-weight:400">issue_type</span></div>
<div style="position:absolute;left:666.20px;top:544.25px;font:400 14.3px/14.3px 'Liberation Mono', monospace;letter-spacing:-0.300px;white-space:pre;color:#d8d8d8"><span style="color:#d6d6d6;font-weight:400">Priority</span></div>
<div style="position:absolute;left:759.80px;top:544.25px;font:400 14.3px/14.3px 'Liberation Mono', monospace;letter-spacing:-0.300px;white-space:pre;color:#d8d8d8"><span style="color:#d6d6d6;font-weight:400">Summary</span></div>
<div style="position:absolute;left:423.20px;top:566.35px;font:400 14.3px/14.3px 'Liberation Mono', monospace;letter-spacing:-0.300px;white-space:pre;color:#d8d8d8"><span style="color:#d6d6d6;font-weight:400">KD</span></div>
<div style="position:absolute;left:545.50px;top:566.35px;font:400 14.3px/14.3px 'Liberation Mono', monospace;letter-spacing:-0.300px;white-space:pre;color:#d8d8d8"><span style="color:#d6d6d6;font-weight:400">Bug</span></div>
<div style="position:absolute;left:666.20px;top:566.35px;font:400 14.3px/14.3px 'Liberation Mono', monospace;letter-spacing:-0.300px;white-space:pre;color:#d8d8d8"><span style="color:#d6d6d6;font-weight:400">Low</span></div>
<div style="position:absolute;left:759.80px;top:566.35px;font:400 14.3px/14.3px 'Liberation Mono', monospace;letter-spacing:-0.300px;white-space:pre;color:#d8d8d8"><span style="color:#d6d6d6;font-weight:400">The issue type is not cor</span></div>
</div></div></body></html>
